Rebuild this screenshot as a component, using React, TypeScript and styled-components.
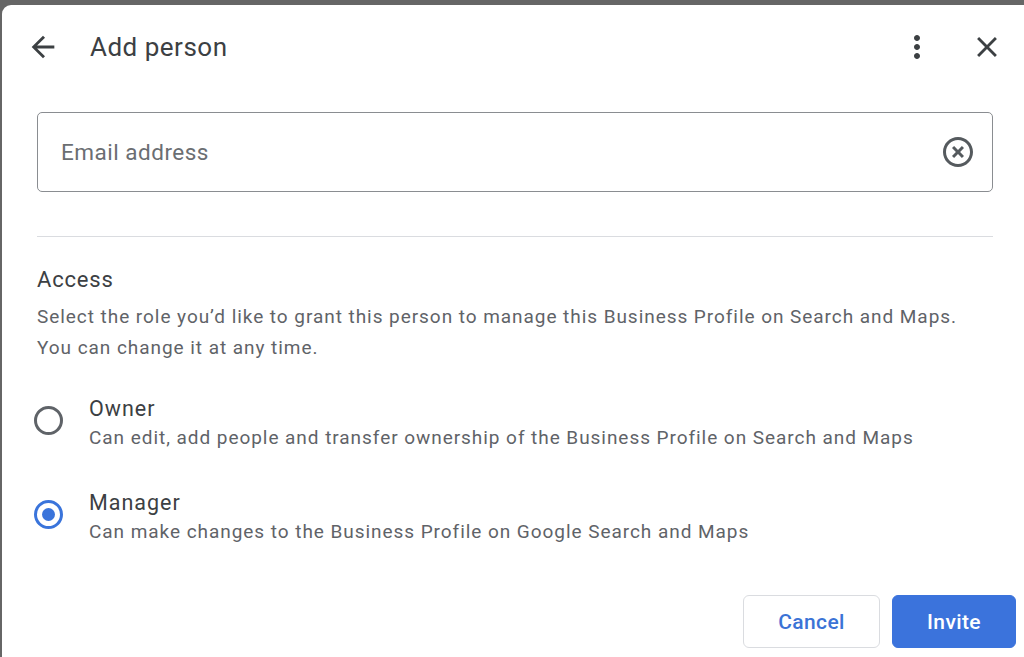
import * as React from 'react';
import styled, { createGlobalStyle } from 'styled-components';

const GlobalStyle = createGlobalStyle`
  html, body {
    margin: 0;
    padding: 0;
    background: #666666;
    overflow: hidden;
  }
  body {
    font-family: Roboto, "Liberation Sans", Arial, sans-serif;
    -webkit-font-smoothing: antialiased;
  }
`;

const Dialog = styled.div`
  margin: 5px 0 0 2px;
  width: 1030px;
  height: 660px;
  box-sizing: border-box;
  background: #fff;
  border-radius: 9px 9px 0 0;
  padding: 0 16px 0 35px;
  display: flex;
  flex-direction: column;
`;

const Header = styled.div`
  height: 84px;
  display: flex;
  align-items: center;
  margin-right: 12px;
`;

const IconButton = styled.button<{ $size?: number }>`
  width: ${p => p.$size || 36}px;
  height: ${p => p.$size || 36}px;
  padding: 0;
  border: none;
  background: transparent;
  color: #3c4043;
  display: flex;
  align-items: center;
  justify-content: center;
  cursor: pointer;
  svg {
    width: 100%;
    height: 100%;
    fill: currentColor;
  }
`;

const BackButton = styled(IconButton)`
  margin-left: -11px;
`;

const Title = styled.h1`
  margin: 0 0 0 30px;
  flex: 1;
  font-size: 26px;
  font-weight: 400;
  color: #3c4043;
  letter-spacing: 0.5px;
`;

const HeaderActions = styled.div`
  display: flex;
  align-items: center;
  gap: 35px;
`;

const InputBox = styled.label`
  margin: 23px 23px 0 0;
  height: 80px;
  box-sizing: border-box;
  border: 1.5px solid #8a8d91;
  border-radius: 5px;
  display: flex;
  align-items: center;
  padding: 0 16px 0 23px;
`;

const EmailInput = styled.input`
  flex: 1;
  border: none;
  outline: none;
  background: transparent;
  font-family: inherit;
  font-size: 22.5px;
  letter-spacing: 0.5px;
  color: #3c4043;
  padding: 0;
  &::placeholder {
    color: #6b6e72;
  }
`;

const ClearButton = styled(IconButton)`
  color: #555a5e;
`;

const Divider = styled.hr`
  margin: 44px 23px 0 0;
  border: none;
  border-top: 1.5px solid #dadce0;
`;

const SectionTitle = styled.h2`
  margin: 29px 0 0 0;
  font-size: 22px;
  line-height: 28px;
  font-weight: 400;
  letter-spacing: 0.8px;
  color: #3c4043;
`;

const SectionText = styled.p`
  margin: 7px 0 0 0;
  font-size: 19px;
  line-height: 31px;
  letter-spacing: 0.95px;
  color: #5f6368;
`;

const Options = styled.div`
  display: flex;
  flex-direction: column;
  gap: 36px;
  margin-top: 31px;
`;

const Option = styled.label`
  display: flex;
  align-items: flex-start;
  cursor: pointer;
`;

const Radio = styled.span<{ $checked?: boolean }>`
  flex: none;
  width: 29px;
  height: 29px;
  box-sizing: border-box;
  margin: 12px 0 0 -3px;
  border-radius: 50%;
  border: 3px solid ${p => (p.$checked ? '#3a74db' : '#5f6368')};
  display: flex;
  align-items: center;
  justify-content: center;
  &::after {
    content: '';
    width: 13px;
    height: 13px;
    border-radius: 50%;
    background: ${p => (p.$checked ? '#3a74db' : 'transparent')};
  }
`;

const OptionText = styled.div`
  margin-left: 26px;
  display: flex;
  flex-direction: column;
`;

const OptionLabel = styled.span`
  font-size: 21.5px;
  line-height: 29px;
  letter-spacing: 1px;
  color: #3c4043;
`;

const OptionHint = styled.span`
  font-size: 19px;
  line-height: 29px;
  letter-spacing: 0.95px;
  color: #5f6368;
`;

const Footer = styled.div`
  margin-top: 49px;
  display: flex;
  justify-content: flex-end;
  gap: 12px;
`;

const Button = styled.button<{ $primary?: boolean; $width: number }>`
  width: ${p => p.$width}px;
  height: 53px;
  box-sizing: border-box;
  padding: 0;
  border-radius: 6px;
  border: 1.5px solid ${p => (p.$primary ? '#3b73dc' : '#dadce0')};
  background: ${p => (p.$primary ? '#3b73dc' : '#fff')};
  color: ${p => (p.$primary ? '#fff' : '#3b73d6')};
  font-family: inherit;
  font-size: 21px;
  font-weight: 500;
  letter-spacing: 0.4px;
  cursor: pointer;
`;

const ArrowBack = () => (
  <svg viewBox="0 0 24 24">
    <path d="M20 11H7.83l5.59-5.59L12 4l-8 8 8 8 1.41-1.41L7.83 13H20v-2z" />
  </svg>
);

const MoreVert = () => (
  <svg viewBox="0 0 24 24">
    <path d="M12 8c1.1 0 2-.9 2-2s-.9-2-2-2-2 .9-2 2 .9 2 2 2zm0 2c-1.1 0-2 .9-2 2s.9 2 2 2 2-.9 2-2-.9-2-2-2zm0 6c-1.1 0-2 .9-2 2s.9 2 2 2 2-.9 2-2-.9-2-2-2z" />
  </svg>
);

const CloseIcon = () => (
  <svg viewBox="0 0 24 24">
    <path d="M19 6.41L17.59 5 12 10.59 6.41 5 5 6.41 10.59 12 5 17.59 6.41 19 12 13.41 17.59 19 19 17.59 13.41 12z" />
  </svg>
);

const ClearIcon = () => (
  <svg viewBox="0 0 24 24">
    <path d="M14.59 8L12 10.59 9.41 8 8 9.41 10.59 12 8 14.59 9.41 16 12 13.41 14.59 16 16 14.59 13.41 12 16 9.41 14.59 8zM12 2C6.47 2 2 6.47 2 12s4.47 10 10 10 10-4.47 10-10S17.53 2 12 2zm0 18c-4.41 0-8-3.59-8-8s3.59-8 8-8 8 3.59 8 8-3.59 8-8 8z" />
  </svg>
);

const roles = [
  {
    id: 'owner',
    label: 'Owner',
    hint: 'Can edit, add people and transfer ownership of the Business Profile on Search and Maps',
  },
  {
    id: 'manager',
    label: 'Manager',
    hint: 'Can make changes to the Business Profile on Google Search and Maps',
  },
];

export default function App() {
  const [role, setRole] = React.useState('manager');
  const [email, setEmail] = React.useState('');

  return (
    <>
      <GlobalStyle />
      <Dialog>
        <Header>
          <BackButton $size={34} aria-label="Back">
            <ArrowBack />
          </BackButton>
          <Title>Add person</Title>
          <HeaderActions>
            <IconButton $size={36} aria-label="More options">
              <MoreVert />
            </IconButton>
            <IconButton $size={34} aria-label="Close">
              <CloseIcon />
            </IconButton>
          </HeaderActions>
        </Header>

        <InputBox>
          <EmailInput
            placeholder="Email address"
            value={email}
            onChange={e => setEmail(e.target.value)}
          />
          <ClearButton $size={36} aria-label="Clear" onClick={() => setEmail('')}>
            <ClearIcon />
          </ClearButton>
        </InputBox>

        <Divider />

        <SectionTitle>Access</SectionTitle>
        <SectionText>
          Select the role you’d like to grant this person to manage this Business Profile on Search and Maps.
          <br />
          You can change it at any time.
        </SectionText>

        <Options>
          {roles.map(r => (
            <Option key={r.id} onClick={() => setRole(r.id)}>
              <Radio $checked={role === r.id} />
              <OptionText>
                <OptionLabel>{r.label}</OptionLabel>
                <OptionHint>{r.hint}</OptionHint>
              </OptionText>
            </Option>
          ))}
        </Options>

        <Footer>
          <Button $width={137}>Cancel</Button>
          <Button $primary $width={124}>Invite</Button>
        </Footer>
      </Dialog>
    </>
  );
}
